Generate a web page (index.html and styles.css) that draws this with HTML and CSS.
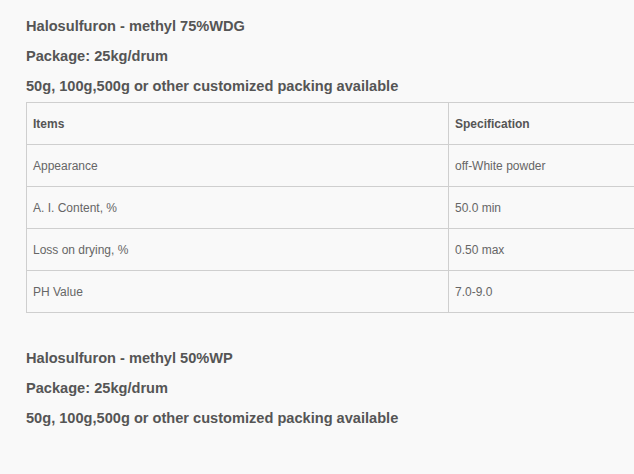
FILE: index.html
```html
<!DOCTYPE html>
<html>
<head>
<meta charset="utf-8">
<link rel="stylesheet" href="styles.css">
</head>
<body>
<div class="content">
  <p class="line">Halosulfuron - methyl 75%WDG</p>
  <p class="line">Package: 25kg/drum</p>
  <p class="line">50g, 100g,500g or other customized packing available</p>
  <div class="table-wrap">
    <table class="spec">
      <tr class="head"><td class="c1">Items</td><td>Specification</td></tr>
      <tr><td class="c1">Appearance</td><td>off-White powder</td></tr>
      <tr><td class="c1">A. I. Content, %</td><td>50.0 min</td></tr>
      <tr><td class="c1">Loss on drying, %</td><td>0.50 max</td></tr>
      <tr><td class="c1">PH Value</td><td>7.0-9.0</td></tr>
    </table>
  </div>
  <div class="gap"></div>
  <p class="line">Halosulfuron - methyl 50%WP</p>
  <p class="line">Package: 25kg/drum</p>
  <p class="line">50g, 100g,500g or other customized packing available</p>
</div>
</body>
</html>
```
FILE: styles.css
```css
html, body {
  margin: 0;
  padding: 0;
  background: #f9f9f9;
  overflow: hidden;
}
.content {
  padding: 11px 0 0 26px;
  font-family: "Liberation Sans", Arial, sans-serif;
  color: #555;
}
.line {
  margin: 0;
  font-size: 14.6px;
  font-weight: bold;
  line-height: 30px;
  white-space: nowrap;
}
.table-wrap {
  margin-top: 1px;
  overflow: hidden;
}
.spec {
  border-collapse: collapse;
  width: 760px;
  font-size: 12px;
  color: #666;
}
.spec td {
  border: 1px solid #cfcfcf;
  height: 42px;
  padding: 0 6px;
  box-sizing: border-box;
  vertical-align: middle;
}
.spec td.c1 {
  width: 422px;
}
.spec .head td {
  font-weight: bold;
  color: #555;
}
.gap {
  height: 30px;
}
```
